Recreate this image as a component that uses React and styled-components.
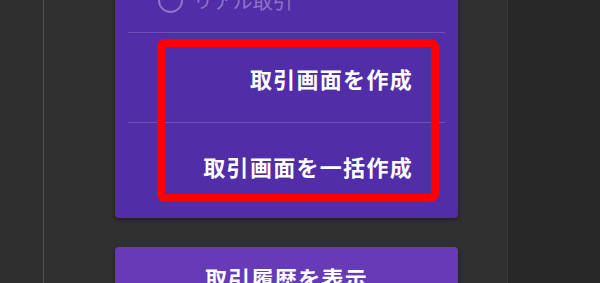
import React from "react";
import styled, { createGlobalStyle } from "styled-components";

const Global = createGlobalStyle`
  html, body { margin: 0; padding: 0; background: #303030; overflow: hidden; }
  body { font-family: "Noto Sans CJK JP", "Noto Sans", sans-serif; }
`;

const Page = styled.div`
  display: flex;
  width: 600px;
  height: 283px;
  overflow: hidden;
  background: #303030;
`;

const LeftRail = styled.div`
  width: 43px;
  flex: none;
  background: #2f2f2f;
  border-right: 1px solid #4e4e4e;
`;

const Main = styled.div`
  flex: 1;
  display: flex;
  flex-direction: column;
  gap: 29px;
  padding-left: 71px;
  margin-top: -22px;
`;

const Card = styled.div`
  position: relative;
  width: 343px;
  box-sizing: border-box;
  padding: 0 13px 10px;
  background: #512da8;
  border-radius: 4px;
  box-shadow: 0 2px 4px rgba(0, 0, 0, 0.35);
`;

const RadioRow = styled.div`
  height: 54px;
  box-sizing: border-box;
  padding: 0 0 10px 30px;
  display: flex;
  align-items: center;
  gap: 10px;
  color: rgba(255, 255, 255, 0.35);
  font-size: 20px;
`;

const RadioCircle = styled.span`
  width: 21px;
  height: 21px;
  border: 2px solid rgba(255, 255, 255, 0.35);
  border-radius: 50%;
  flex: none;
`;

const Divider = styled.div`
  height: 1px;
  background: rgba(255, 255, 255, 0.17);
`;

const MenuItem = styled.div`
  height: ${(p) => p.$h}px;
  display: flex;
  align-items: center;
  justify-content: flex-end;
  padding-right: 32px;
  color: #ffffff;
  font-size: 22px;
  font-weight: 700;
  letter-spacing: 1.3px;
`;

const Highlight = styled.div`
  position: absolute;
  left: 42px;
  top: 61px;
  width: 282px;
  height: 163px;
  box-sizing: border-box;
  border: 8px solid #ff0000;
  border-radius: 8px;
  pointer-events: none;
`;

const HistoryButton = styled.div`
  width: 343px;
  height: 70px;
  box-sizing: border-box;
  padding-top: 14px;
  background: #673ab7;
  border-radius: 4px;
  color: #ffffff;
  font-size: 22px;
  font-weight: 700;
  letter-spacing: 1.3px;
  text-align: center;
  box-shadow: 0 2px 4px rgba(0, 0, 0, 0.35);
`;

const RightPanel = styled.div`
  width: 92px;
  flex: none;
  background: #282828;
  border-left: 1px solid #3a3a3a;
`;

export default function App() {
  return (
    <>
      <Global />
      <Page>
        <LeftRail />
        <Main>
          <Card>
            <RadioRow>
              <RadioCircle />
              <span>リアル取引</span>
            </RadioRow>
            <Divider />
            <MenuItem $h={89}>取引画面を作成</MenuItem>
            <Divider />
            <MenuItem $h={85}>取引画面を一括作成</MenuItem>
            <Highlight />
          </Card>
          <HistoryButton>取引履歴を表示</HistoryButton>
        </Main>
        <RightPanel />
      </Page>
    </>
  );
}
